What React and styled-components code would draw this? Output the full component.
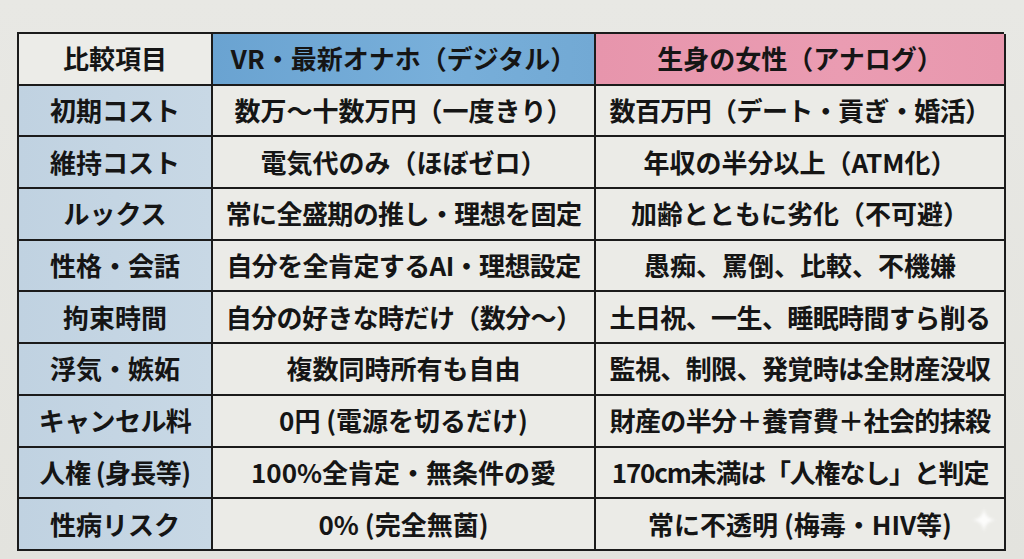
import { Fragment } from "react";
import styled, { createGlobalStyle } from "styled-components";

const GlobalStyle = createGlobalStyle`
	html, body {
		margin: 0;
		padding: 0;
		background: #e5e5e0;
	}
	body {
		font-family: "Noto Sans CJK JP", "Noto Sans", sans-serif;
	}
`;

const Page = styled.div`
	position: relative;
	width: 1024px;
	height: 559px;
	padding: 32px 0 0 17px;
	box-sizing: border-box;
	background: linear-gradient(180deg, #e8e8e4 0%, #e3e3de 100%);
	overflow: hidden;
`;

const Table = styled.div`
	display: grid;
	grid-template-columns: 194px 383px 410px;
	grid-template-rows: repeat(10, 51.7px);
	width: 987px;
	border-top: 2px solid #1b1b1b;
	border-left: 2px solid #1b1b1b;
	box-sizing: border-box;
`;

const tones = {
	corner: "#ecece8",
	digital: "linear-gradient(90deg, #6aa3d1 0%, #78afda 60%, #72a9d4 100%)",
	analog: "linear-gradient(90deg, #e795ac 0%, #ea9cb2 60%, #e898ae 100%)",
	label: "linear-gradient(90deg, #c0d2e1 0%, #c8d8e5 100%)",
	body: "#ebebe7",
};

const Cell = styled.div`
	display: flex;
	align-items: center;
	justify-content: center;
	box-sizing: border-box;
	border-right: 2px solid #1b1b1b;
	border-bottom: 2px solid #1b1b1b;
	background: ${({ $tone }) => tones[$tone] || tones.body};
	color: #151515;
	font-size: 26px;
	font-weight: 700;
	letter-spacing: ${({ $spacing }) => $spacing || 0}px;
	white-space: nowrap;
	padding-bottom: 2px;
`;

const Sparkle = styled.svg`
	position: absolute;
	left: 971px;
	top: 507px;
	width: 26px;
	height: 26px;
	filter: blur(1.5px);
	opacity: 0.85;
`;

const rows = [
	["初期コスト", "数万〜十数万円（一度きり）", "数百万円（デート・貢ぎ・婚活）", 0, -0.6],
	["維持コスト", "電気代のみ（ほぼゼロ）", "年収の半分以上（ATM化）", 0, 0],
	["ルックス", "常に全盛期の推し・理想を固定", "加齢とともに劣化（不可避）", -0.6, 0],
	["性格・会話", "自分を全肯定するAI・理想設定", "愚痴、罵倒、比較、不機嫌", -0.6, 0],
	["拘束時間", "自分の好きな時だけ（数分〜）", "土日祝、一生、睡眠時間すら削る", -0.6, -0.6],
	["浮気・嫉妬", "複数同時所有も自由", "監視、制限、発覚時は全財産没収", 0, -0.6],
	["キャンセル料", "0円 (電源を切るだけ)", "財産の半分＋養育費＋社会的抹殺", 0, -0.6],
	["人権 (身長等)", "100%全肯定・無条件の愛", "170cm未満は「人権なし」と判定", 0, -1.2],
	["性病リスク", "0% (完全無菌)", "常に不透明 (梅毒・HIV等)", 0, 0],
];

const App = () => {
	return (
		<>
			<GlobalStyle />
			<Page>
				<Table role="table">
					<Cell $tone="corner">比較項目</Cell>
					<Cell $tone="digital">VR・最新オナホ（デジタル）</Cell>
					<Cell $tone="analog">生身の女性（アナログ）</Cell>
					{rows.map(([label, digital, analog, digitalSpacing, analogSpacing]) => (
						<Fragment key={label}>
							<Cell $tone="label" $spacing={label.length > 5 ? -0.6 : 0}>
								{label}
							</Cell>
							<Cell $spacing={digitalSpacing}>{digital}</Cell>
							<Cell $spacing={analogSpacing}>{analog}</Cell>
						</Fragment>
					))}
				</Table>
				<Sparkle viewBox="0 0 24 24">
					<path d="M12 1 C12.8 8 16 11.2 23 12 C16 12.8 12.8 16 12 23 C11.2 16 8 12.8 1 12 C8 11.2 11.2 8 12 1 Z" fill="#ffffff" />
				</Sparkle>
			</Page>
		</>
	);
};

export default App;
